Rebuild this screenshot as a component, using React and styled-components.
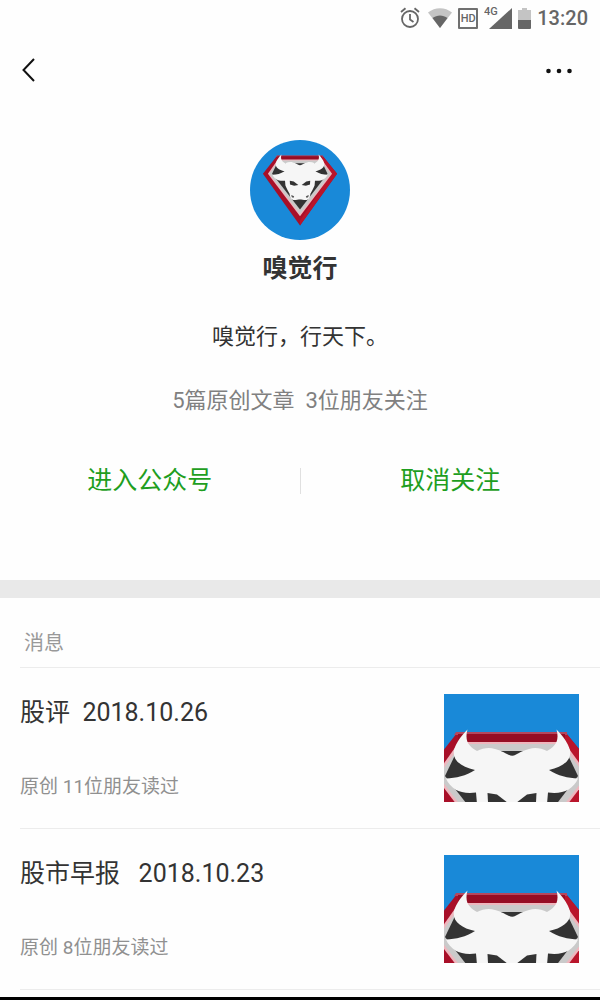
import styled, { createGlobalStyle } from 'styled-components';

const GlobalStyle = createGlobalStyle`
  * {
    box-sizing: border-box;
  }
  body {
    margin: 0;
    background-color: #fefefe;
    color: #333;
    font-family: Roboto, "Noto Sans CJK SC", sans-serif;
  }
`

const Page = styled.div`
  min-height: 100vh;
  display: flex;
  flex-direction: column;
`
const StatusBar = styled.div`
  height: 36px;
  padding-right: 12px;
  display: flex;
  align-items: center;
  justify-content: flex-end;
  color: #666;
  svg {
    display: block;
  }
`
const StatusIcons = styled.div`
  display: flex;
  align-items: center;
  gap: 6px;
  margin-right: 6px;
`
const HdBadge = styled.span`
  width: 20px;
  height: 21px;
  border: 2px solid #707070;
  border-radius: 1px;
  font-size: 11px;
  font-weight: 500;
  line-height: 17px;
  display: flex;
  justify-content: center;
`
const Time = styled.time`
  font-size: 20px;
  font-weight: 500;
  line-height: 24px;
`
const NavBar = styled.nav`
  height: 68px;
  padding: 0 22px;
  display: flex;
  align-items: center;
  justify-content: space-between;
`
const IconButton = styled.button`
  padding: 0;
  border: none;
  background: none;
  color: #111;
  cursor: pointer;
  svg {
    display: block;
  }
`
const Profile = styled.header`
  padding: 36px 0 83px;
  display: flex;
  flex-direction: column;
  align-items: center;
`
const Avatar = styled.div`
  width: 100px;
  height: 100px;
  border-radius: 50%;
  overflow: hidden;
`
const Name = styled.h1`
  margin: 11px 0 0;
  font-size: 25px;
  font-weight: 700;
  line-height: 36px;
`
const Description = styled.p`
  margin: 34px 0 0;
  font-size: 22px;
  line-height: 32px;
`
const Stats = styled.p`
  margin: 32px 0 0;
  font-size: 22px;
  line-height: 32px;
  color: #808080;
  white-space: pre;
`
const Actions = styled.div`
  width: 100%;
  margin-top: 48px;
  display: flex;
  align-items: center;
`
const ActionButton = styled.button`
  flex: 1;
  padding: 0;
  border: none;
  background: none;
  color: #1f9e1f;
  font-family: inherit;
  font-size: 25px;
  line-height: 32px;
  cursor: pointer;
`
const Divider = styled.span`
  width: 1px;
  height: 26px;
  background-color: #e0e0e0;
`
const Band = styled.div`
  height: 18px;
  background-color: #e9e9e9;
`
const Messages = styled.section`
  padding-left: 20px;
`
const SectionTitle = styled.h2`
  margin: 0;
  padding: 29px 4px 8px;
  border-bottom: 1px solid #ececec;
  font-size: 20px;
  font-weight: 400;
  line-height: 32px;
  color: #999;
`
const Article = styled.a`
  padding: 26px 21px 26px 0;
  border-bottom: 1px solid #ececec;
  display: flex;
  justify-content: space-between;
  color: inherit;
  text-decoration: none;
`
const ArticleText = styled.div`
  display: flex;
  flex-direction: column;
  justify-content: space-between;
`
const ArticleTitle = styled.h3`
  margin: 0;
  font-size: 25px;
  font-weight: 400;
  line-height: 38px;
  white-space: pre;
`
const Meta = styled.span`
  font-size: 19px;
  line-height: 30px;
  color: #909090;
`
const Thumb = styled.div`
  width: 135px;
  height: 108px;
`
const BottomBar = styled.div`
  height: 3px;
  margin-top: 7px;
  background-color: #000;
`

const articles = [
  { id: 1, title: '股评  2018.10.26', meta: '原创 11位朋友读过' },
  { id: 2, title: '股市早报   2018.10.23', meta: '原创 8位朋友读过' },
]

// left half of the bull's head, mirrored for the right one
const HalfHead = () => (
  <>
    <path
      fill="#f6f6f6"
      d="M69 62C64 62 60 57 51 55C45 53 39 54 33 57C26 53 20 48 23.5 35.5C17 42 12 49 10 56C8 66 17 73 31 76C22 82 12 84 2 84.5C7 96 18 100.500 32 98.500L33 110C36 118 40 124 43 130C44 140 47 145 54 145C60 145 63 143 69 143Z"
    />
    <path fill="#333" d="M43.500 99L53 100.500L64 109L54 111L44 108Z" />
    <path fill="#555" d="M47 133L54 136L52 140L48 138Z" />
  </>
)

const BullLogo = ({ viewBox }) => (
  <svg width="100%" height="100%" viewBox={viewBox} style={{ display: 'block' }} aria-hidden="true">
    <rect x="-60" y="-10" width="260" height="270" fill="#1989d8" />
    <path fill="#a80f28" d="M13 39H122L157 82L68 206L-21 82Z" />
    <path fill="#b9152b" d="M122 39L157 82L68 206V194L143 82L115 46Z" />
    <path fill="#b5475d" d="M12 38H123V41H10Z" />
    <path fill="#960d24" d="M14 40H121V49H14Z" />
    <path fill="#eeb6bd" d="M15 48H120L145 82L68 184L-9 82Z" />
    <path fill="#cacaca" d="M17 50H118L142 82L68 179L-6 82Z" />
    <path fill="#333" d="M13 57H122L134 82L68 168L1 82Z" />
    <HalfHead />
    <g transform="translate(136 0) scale(-1 1)">
      <HalfHead />
    </g>
  </svg>
)

const AlarmIcon = () => (
  <svg width="22" height="22" viewBox="0 0 22 22" fill="none" stroke="currentColor" strokeWidth="1.8">
    <circle cx="10" cy="12" r="8" />
    <path d="M10 7V12.5L13.5 15M1 5L5.5 1.2M19 5L14.5 1.2" />
  </svg>
)

const WifiIcon = () => (
  <svg width="24" height="20" viewBox="0 0 24 20">
    <path fill="#c4c4c4" d="M0 4.5C7 -1.2 17 -1.2 24 4.5L12 20Z" />
    <path fill="currentColor" d="M4.5 10C9 6.6 15 6.6 19.5 10L12 20Z" />
  </svg>
)

const SignalIcon = () => (
  <svg width="28" height="26" viewBox="0 0 28 26" fill="currentColor">
    <text x="0" y="10" fontSize="11" fontWeight="500">4G</text>
    <path d="M5 24L28 3V24Z" />
  </svg>
)

const BatteryIcon = () => (
  <svg width="13" height="21" viewBox="0 0 13 21">
    <path fill="#c4c4c4" d="M4 0H9V2H13V12H0V2H4Z" />
    <path fill="currentColor" d="M0 12H13V20Q13 21 12 21H1Q0 21 0 20Z" />
  </svg>
)

const App = () => {
  return (
    <Page>
      <GlobalStyle />
      <StatusBar>
        <StatusIcons>
          <AlarmIcon />
          <WifiIcon />
          <HdBadge>HD</HdBadge>
          <SignalIcon />
          <BatteryIcon />
        </StatusIcons>
        <Time>13:20</Time>
      </StatusBar>
      <NavBar>
        <IconButton aria-label="返回">
          <svg width="14" height="26" viewBox="0 0 14 26" fill="none" stroke="currentColor" strokeWidth="2">
            <path d="M12 2L1.500 13L12 24" />
          </svg>
        </IconButton>
        <IconButton aria-label="更多">
          <svg width="36" height="24" viewBox="0 0 36 24" fill="currentColor">
            <circle cx="6.5" cy="13" r="2.3" />
            <circle cx="17" cy="13" r="2.3" />
            <circle cx="27.5" cy="13" r="2.3" />
          </svg>
        </IconButton>
      </NavBar>
      <Profile>
        <Avatar>
          <BullLogo viewBox="-52 1 240 240" />
        </Avatar>
        <Name>嗅觉行</Name>
        <Description>嗅觉行，行天下。</Description>
        <Stats>{'5篇原创文章  3位朋友关注'}</Stats>
        <Actions>
          <ActionButton>进入公众号</ActionButton>
          <Divider />
          <ActionButton>取消关注</ActionButton>
        </Actions>
      </Profile>
      <Band />
      <Messages>
        <SectionTitle>消息</SectionTitle>
        {articles.map((item) => (
          <Article href="#" key={item.id}>
            <ArticleText>
              <ArticleTitle>{item.title}</ArticleTitle>
              <Meta>{item.meta}</Meta>
            </ArticleText>
            <Thumb>
              <BullLogo viewBox="0 0 135 108" />
            </Thumb>
          </Article>
        ))}
      </Messages>
      <BottomBar />
    </Page>
  )
}

export default App
